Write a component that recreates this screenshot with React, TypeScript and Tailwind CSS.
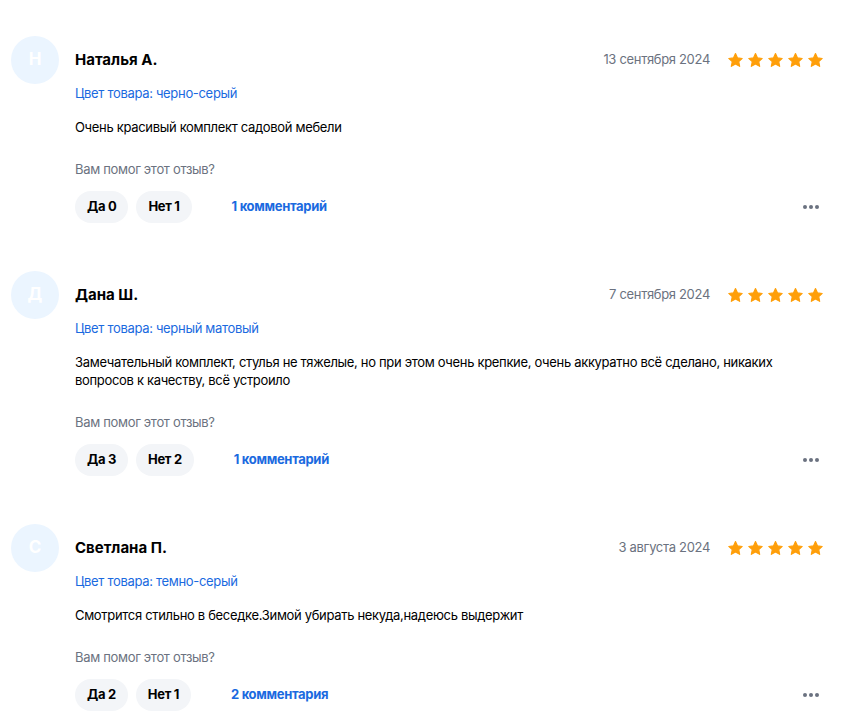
import React from "react";

type Review = {
  initial: string;
  name: string;
  date: string;
  color: string;
  text: string;
  yes: number;
  no: number;
  comments: string;
};

const reviews: Review[] = [
  {
    initial: "Н",
    name: "Наталья А.",
    date: "13 сентября 2024",
    color: "черно-серый",
    text: "Очень красивый комплект садовой мебели",
    yes: 0,
    no: 1,
    comments: "1 комментарий",
  },
  {
    initial: "Д",
    name: "Дана Ш.",
    date: "7 сентября 2024",
    color: "черный матовый",
    text: "Замечательный комплект, стулья не тяжелые, но при этом очень крепкие, очень аккуратно всё сделано, никаких вопросов к качеству, всё устроило",
    yes: 3,
    no: 2,
    comments: "1 комментарий",
  },
  {
    initial: "С",
    name: "Светлана П.",
    date: "3 августа 2024",
    color: "темно-серый",
    text: "Смотрится стильно в беседке.Зимой убирать некуда,надеюсь выдержит",
    yes: 2,
    no: 1,
    comments: "2 комментария",
  },
];

function Star() {
  return (
    <svg width="17" height="17" viewBox="0 0 24 24" fill="#ff9f0a">
      <path
        d="M12 2.2l2.9 6.1 6.6.8-4.9 4.6 1.3 6.6L12 17l-5.9 3.3 1.3-6.6-4.9-4.6 6.6-.8z"
        stroke="#ff9f0a"
        strokeWidth="1.6"
        strokeLinejoin="round"
      />
    </svg>
  );
}

function ReviewCard({ r }: { r: Review }) {
  return (
    <div className="flex gap-4 pb-[48px]">
      <div className="w-12 h-12 shrink-0 rounded-full bg-[#ebf5ff] flex items-center justify-center text-white font-bold text-[17px]">
        {r.initial}
      </div>
      <div className="flex-1 pt-[13px] tracking-[-0.02em]">
        <div className="flex items-center justify-between h-[22px]">
          <div className="text-[15px] font-bold text-black tracking-normal">{r.name}</div>
          <div className="flex items-center gap-[17px]">
            <div className="text-[13px] text-[#6b7280]">{r.date}</div>
            <div className="flex gap-[3px]">
              {[0, 1, 2, 3, 4].map((i) => (
                <Star key={i} />
              ))}
            </div>
          </div>
        </div>
        <div className="mt-[11px] text-[13px] text-[#1a6ae0] leading-[22px]">
          Цвет товара: {r.color}
        </div>
        <p className="mt-[14px] text-[13px] text-black leading-[18px] pr-6">{r.text}</p>
        <div className="mt-[22px] text-[13px] text-[#6b7280] leading-[22px]">
          Вам помог этот отзыв?
        </div>
        <div className="mt-[11px] flex items-center">
          <div className="flex gap-2">
            <button className="h-8 px-3 rounded-full bg-[#f3f5f8] text-[13px] font-bold text-black">
              Да {r.yes}
            </button>
            <button className="h-8 px-3 rounded-full bg-[#f3f5f8] text-[13px] font-bold text-black">
              Нет {r.no}
            </button>
          </div>
          <a className="ml-[40px] text-[13px] font-bold text-[#1a6ae0]">{r.comments}</a>
          <div className="ml-auto flex gap-[2px] pr-[5px]">
            <span className="w-1 h-1 rounded-full bg-[#6b7280]" />
            <span className="w-1 h-1 rounded-full bg-[#6b7280]" />
            <span className="w-1 h-1 rounded-full bg-[#6b7280]" />
          </div>
        </div>
      </div>
    </div>
  );
}

export default function App() {
  return (
    <div
      className="bg-white min-h-screen pl-[11px] pr-[42px] pt-[36px]"
      style={{ fontFamily: "Inter, 'Noto Sans', sans-serif" }}
    >
      {reviews.map((r, i) => (
        <ReviewCard key={i} r={r} />
      ))}
    </div>
  );
}
